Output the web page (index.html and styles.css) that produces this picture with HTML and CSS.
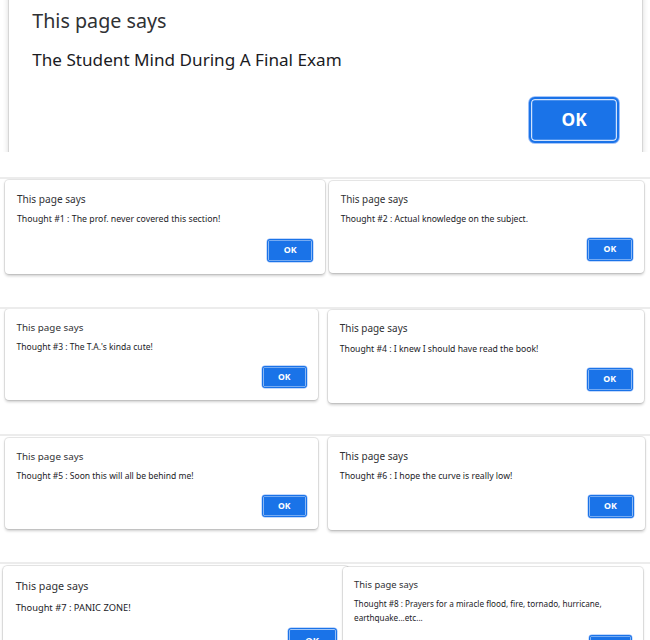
FILE: index.html
```html
<!DOCTYPE html>
<html lang="en">
<head>
<meta charset="utf-8">
<title>The Student Mind During A Final Exam</title>
<link rel="stylesheet" href="styles.css">
</head>
<body>
  <div class="hero">
    <div class="dialog dialog-hero">
      <div class="dialog-title">This page says</div>
      <div class="dialog-msg">The Student Mind During A Final Exam</div>
      <div class="dialog-actions"><button class="ok">OK</button></div>
    </div>
  </div>

  <div class="strip strip-1">
    <div class="dialog d1">
      <div class="dialog-title">This page says</div>
      <div class="dialog-msg">Thought #1 : The prof. never covered this section!</div>
      <div class="dialog-actions"><button class="ok">OK</button></div>
    </div>
    <div class="dialog d2">
      <div class="dialog-title">This page says</div>
      <div class="dialog-msg">Thought #2 : Actual knowledge on the subject.</div>
      <div class="dialog-actions"><button class="ok">OK</button></div>
    </div>
  </div>

  <div class="strip strip-2">
    <div class="dialog d3">
      <div class="dialog-title">This page says</div>
      <div class="dialog-msg">Thought #3 : The T.A.'s kinda cute!</div>
      <div class="dialog-actions"><button class="ok">OK</button></div>
    </div>
    <div class="dialog d4">
      <div class="dialog-title">This page says</div>
      <div class="dialog-msg">Thought #4 : I knew I should have read the book!</div>
      <div class="dialog-actions"><button class="ok">OK</button></div>
    </div>
  </div>

  <div class="strip strip-3">
    <div class="dialog d5">
      <div class="dialog-title">This page says</div>
      <div class="dialog-msg">Thought #5 : Soon this will all be behind me!</div>
      <div class="dialog-actions"><button class="ok">OK</button></div>
    </div>
    <div class="dialog d6">
      <div class="dialog-title">This page says</div>
      <div class="dialog-msg">Thought #6 : I hope the curve is really low!</div>
      <div class="dialog-actions"><button class="ok">OK</button></div>
    </div>
  </div>

  <div class="strip strip-4">
    <div class="dialog d7">
      <div class="dialog-title">This page says</div>
      <div class="dialog-msg">Thought #7 : PANIC ZONE!</div>
      <div class="dialog-actions"><button class="ok">OK</button></div>
    </div>
    <div class="dialog d8">
      <div class="dialog-title">This page says</div>
      <div class="dialog-msg">Thought #8 : Prayers for a miracle flood, fire, tornado, hurricane, earthquake...etc...</div>
      <div class="dialog-actions"><button class="ok">OK</button></div>
    </div>
  </div>
</body>
</html>
```

FILE: styles.css
```css
* {
  box-sizing: border-box;
}

html, body {
  margin: 0;
  padding: 0;
  background: #ffffff;
}

body {
  width: 650px;
  height: 640px;
  overflow: hidden;
  font-family: "Noto Sans", "Open Sans", sans-serif;
}

/* top, large cropped dialog */
.hero {
  height: 152px;
  overflow: hidden;
  padding: 0 8px 0 9px;
}

.dialog-hero {
  font-size: 19.7px;
  margin-top: -17px;
}

/* strips of smaller dialogs */
.strip {
  display: flex;
  align-items: flex-start;
  border-top: 2px solid #ececec;
  overflow: hidden;
}

.strip-1 { margin-top: 25px; height: 130px; }
.strip-2 { height: 127px; }
.strip-3 { height: 128px; }
.strip-4 { height: 78px; }

/* dialog component, sized in em so each copy can be scaled */
.dialog {
  flex: none;
  background: #ffffff;
  border-radius: 0.4em;
  box-shadow: 0 0 0 1px rgba(0, 0, 0, 0.08), 0 0.15em 0.3em rgba(0, 0, 0, 0.2);
  padding: 1.31em 1.15em 1.22em 1.18em;
}

.dialog-title {
  font-size: 1em;
  line-height: 1.2;
  color: #303134;
}

.dialog-msg {
  font-size: 0.87em;
  line-height: 1.7;
  margin-top: 0.762em;
  color: #1b1b1f;
}

.dialog-actions {
  display: flex;
  justify-content: flex-end;
  margin-top: 1.148em;
}

.ok {
  font-family: inherit;
  font-size: 0.88em;
  font-weight: 700;
  color: #ffffff;
  width: 5.227em;
  height: 2.614em;
  padding: 0;
  background: #1a73e8;
  border: 0.12em solid #1a73e8;
  border-radius: 0.34em;
  box-shadow: inset 0 0 0 0.07em #d2e3fc, 0 0 0 0.05em #8ab4f8;
  display: flex;
  align-items: center;
  justify-content: center;
  line-height: 1;
}

/* individual scale/placement of each captured dialog */
.d1 { font-size: 10.1px; width: 320px; margin: 1px 0 0 5px; }
.d2 { font-size: 9.9px; width: 315px; margin: 2px 0 0 4px; }
.d3 { font-size: 9.8px; width: 313px; margin: 0 0 0 5px; }
.d4 { font-size: 9.95px; width: 316px; margin: 1px 0 0 10px; }
.d5 { font-size: 9.8px; width: 313px; margin: 2px 0 0 5px; }
.d6 { font-size: 10px; width: 317px; margin: 1px 0 0 10px; }
.d7 { font-size: 10.7px; width: 346px; margin: 2px 0 0 3px; }
.d8 { font-size: 9.4px; width: 300px; margin: 3px 0 0 -6px; }
```
